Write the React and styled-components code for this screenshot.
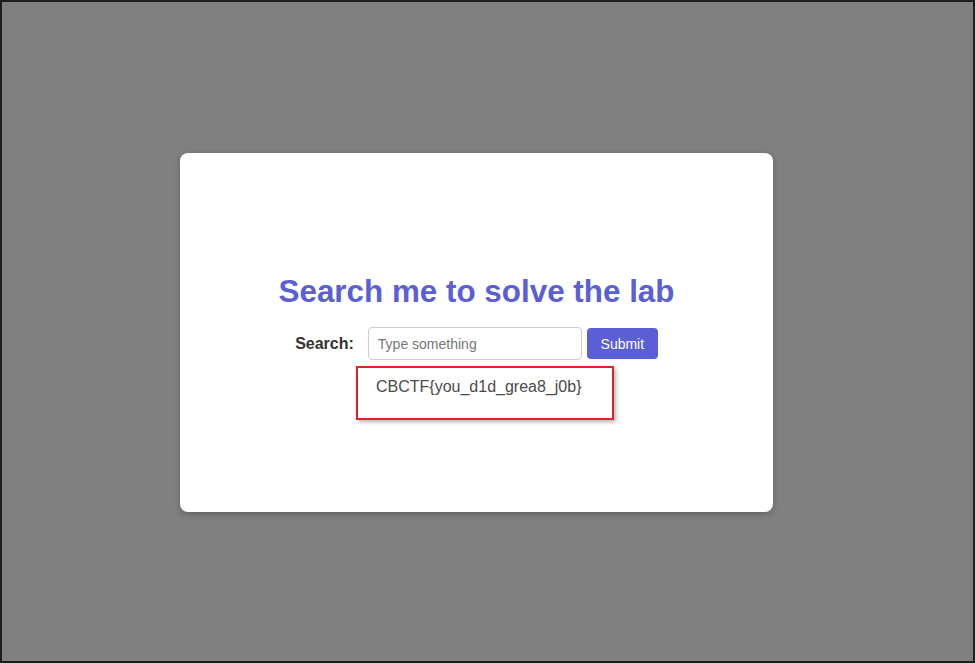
import React from "react";
import styled, { createGlobalStyle } from "styled-components";

const GlobalStyle = createGlobalStyle`
  html, body {
    margin: 0;
    padding: 0;
  }
  body {
    font-family: "Liberation Sans", Arial, sans-serif;
  }
`;

export default function App() {
  return (
    <>
      <GlobalStyle />
      <Screen>
        <Card>
          <Title>Search me to solve the lab</Title>
          <SearchForm onSubmit={(e) => e.preventDefault()}>
            <Label htmlFor="q">Search:</Label>
            <Input id="q" placeholder="Type something" />
            <SubmitButton type="submit">Submit</SubmitButton>
          </SearchForm>
          <Result>CBCTF&#123;you_d1d_grea8_j0b&#125;</Result>
        </Card>
      </Screen>
    </>
  );
}

const Screen = styled.div`
  box-sizing: border-box;
  width: 975px;
  height: 663px;
  border: 2px solid #1e1e1e;
  background-color: #808080;
  display: flex;
  justify-content: center;
  align-items: center;
  padding-right: 22px;
  padding-top: 2px;
`;

const Card = styled.div`
  box-sizing: border-box;
  width: 593px;
  height: 359px;
  background-color: #fff;
  border-radius: 8px;
  box-shadow: 0 2px 6px rgba(0, 0, 0, 0.25);
  display: flex;
  flex-direction: column;
  align-items: center;
  padding-top: 120px;
`;

const Title = styled.h1`
  margin: 0 0 17px;
  font-size: 31.4px;
  line-height: 37px;
  font-weight: bold;
  color: #5a5fd6;
`;

const SearchForm = styled.form`
  display: flex;
  align-items: center;
  margin: 0;
`;

const Label = styled.label`
  font-size: 16px;
  font-weight: bold;
  color: #333;
  margin-right: 14px;
`;

const Input = styled.input`
  box-sizing: border-box;
  width: 214px;
  height: 33px;
  padding: 0 9px;
  border: 1px solid #ccc;
  border-radius: 4px;
  font-family: inherit;
  font-size: 14px;
  color: #333;
  outline: none;
  &::placeholder {
    color: #777;
  }
`;

const SubmitButton = styled.button`
  box-sizing: border-box;
  margin-left: 5px;
  width: 71px;
  height: 31px;
  border: none;
  border-radius: 4px;
  background-color: #5a5fd6;
  color: #fff;
  font-family: inherit;
  font-size: 14px;
  cursor: pointer;
`;

const Result = styled.div`
  box-sizing: border-box;
  width: 258px;
  height: 54px;
  margin: 6px 0 0 17px;
  padding: 10px 18px;
  border: 2px solid #de2329;
  box-shadow: 2px 2px 4px rgba(0, 0, 0, 0.3);
  font-size: 16px;
  line-height: 18px;
  color: #4a4a4a;
`;
